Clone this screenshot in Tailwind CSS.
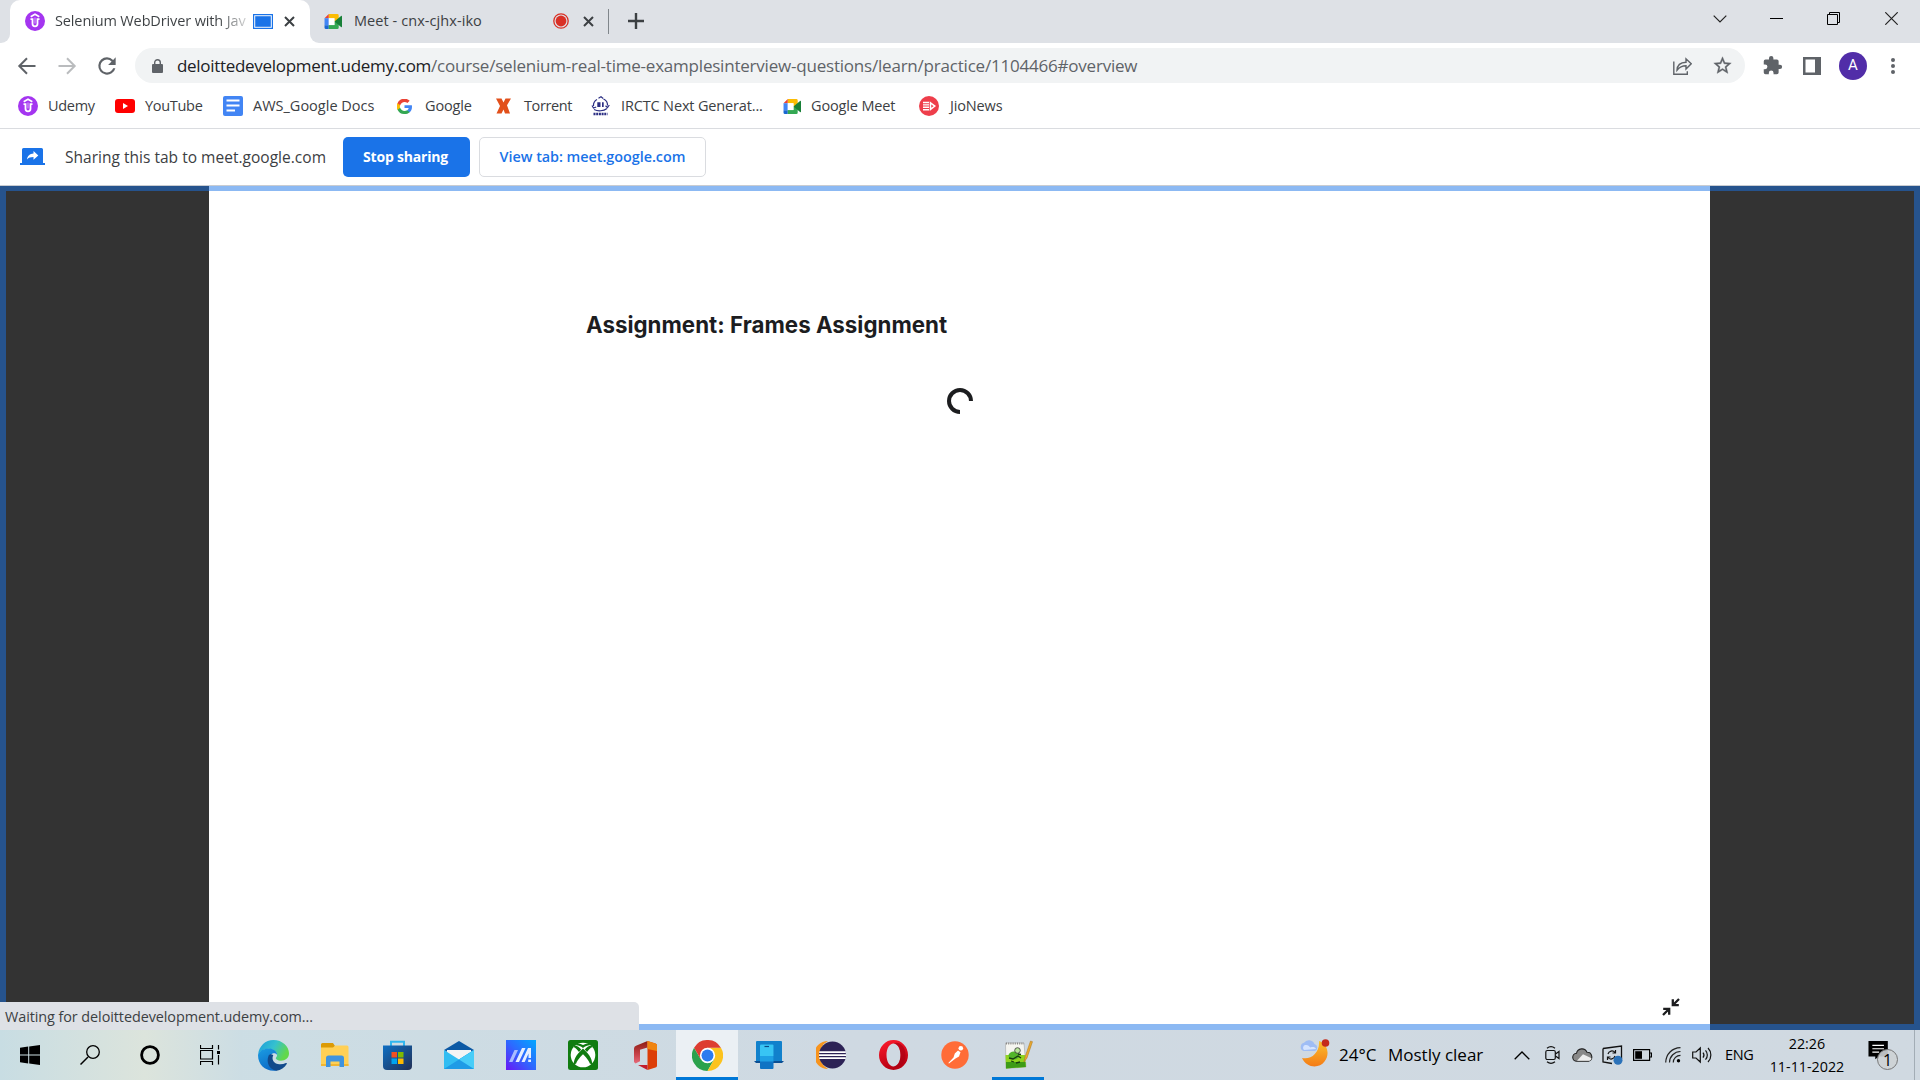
<!DOCTYPE html>
<html lang="en">
<head>
<meta charset="utf-8">
<title>Selenium WebDriver with Java</title>
<script src="https://cdn.jsdelivr.net/npm/@tailwindcss/browser@4"></script>
</head>
<body class="flex h-[1080px] w-[1920px] flex-col overflow-hidden bg-white font-['Open_Sans','Noto_Sans',sans-serif] text-[#3c4043]">

<!-- Shared icons -->
<svg class="hidden">
  <symbol id="udemy" viewBox="0 0 20 20"><circle cx="10" cy="10" r="10" fill="#a435f0"/><path d="M5.700 5.800 10 3.300l4.300 2.500" fill="none" stroke="#fff" stroke-width="1.700"/><path d="M5.500 8.200h2v4.600c0 1.600.9 2.500 2.500 2.500s2.500-.9 2.500-2.500V8.200h2" fill="none" stroke="#fff" stroke-width="1.800"/><path d="M10 6.500v6" stroke="#fff" stroke-width="1" opacity=".6"/></symbol>
  <symbol id="meet" viewBox="0 0 20 18"><path d="M5 1h9a1.5 1.5 0 0 1 1.500 1.500V9H11V5.500H5z" fill="#fbbc04"/><path d="M5 1v4.500H.500z" fill="#ea4335"/><path d="M.5 5.500H5v7.500H.500z" fill="#4285f4"/><path d="M.5 13H5v4H2a1.500 1.500 0 0 1-1.500-1.500z" fill="#1967d2"/><path d="M5 12.800h6V9h4.500v6.500A1.500 1.500 0 0 1 14 17H5z" fill="#34a853"/><path d="m11 9 7-5.800c.6-.4 1 0 1 .5v10.600c0 .6-.5.900-1 .5z" fill="#188038"/><path d="M5 5.500h6v7.300H5z" fill="#fff"/></symbol>
</svg>

<!-- Tab strip -->
<header class="flex h-[43px] shrink-0 bg-[#dee1e6] text-[14.5px]">
  <div class="flex w-[10px] bg-white"><div class="w-full rounded-br-[9px] bg-[#dee1e6]"></div></div>
  <div class="flex w-[300px] items-center rounded-t-[10px] bg-white pb-px pl-[15px]">
    <svg class="size-5 shrink-0"><use href="#udemy"/></svg>
    <div class="ml-[10px] w-[192px] bg-linear-to-r from-[#3c4043] from-85% to-[#3c4043]/20 bg-clip-text tracking-[-0.13px] whitespace-nowrap text-transparent">Selenium WebDriver with Jav</div>
    <svg class="ml-[6px] h-[15px] w-5 shrink-0" viewBox="0 0 20 15"><path d="M.6.600h18.800v13.800H.600z" fill="#fff" stroke="#1a73e8" stroke-width="1.200"/><path d="M2.200 2.200h15.600v10.600H2.200z" fill="#1a73e8"/></svg>
    <svg class="ml-[11px] size-[11px]" viewBox="0 0 11 11"><path d="m1 1 9 9m0-9-9 9" stroke="#3c4043" stroke-width="2"/></svg>
  </div>
  <div class="flex w-[299px] items-center bg-white">
    <div class="flex h-full w-full items-center rounded-bl-[9px] bg-[#dee1e6] pb-px pl-[14px]">
      <svg class="h-[17px] w-[19px]"><use href="#meet"/></svg>
      <div class="ml-[11px] w-[198px] tracking-[0.07px] whitespace-nowrap">Meet - cnx-cjhx-iko</div>
      <svg class="ml-px size-4" viewBox="0 0 16 16"><circle cx="8" cy="8" r="7.200" fill="none" stroke="#d93025" stroke-width="1.300"/><circle cx="8" cy="8" r="5.400" fill="#d93025"/></svg>
      <svg class="ml-[14px] size-[11px]" viewBox="0 0 11 11"><path d="m1 1 9 9m0-9-9 9" stroke="#3c4043" stroke-width="2"/></svg>
      <div class="ml-[14px] h-[25px] w-px bg-[#80868b]"></div>
    </div>
  </div>
  <svg class="mt-[13px] ml-[19px] size-[16px]" viewBox="0 0 16 16"><path d="M8 0v16M0 8h16" stroke="#3c4043" stroke-width="2.400"/></svg>
  <div class="ml-auto flex h-[37px] items-center text-black">
    <svg class="h-2 w-[14px]" viewBox="0 0 14 8"><path d="m.7.700 6.300 6.300L13.300.700" fill="none" stroke="#222" stroke-width="1.200"/></svg>
    <div class="ml-[43px] h-px w-[13px] bg-black"></div>
    <svg class="ml-[44px] size-[13px]" viewBox="0 0 13 13"><path d="M.5 2.500h10v10H.5zM2.500 2.500v-2h10v10h-2" fill="none" stroke="#000"/></svg>
    <svg class="mr-[22px] ml-[45px] size-[13px]" viewBox="0 0 13 13"><path d="m.3.300 12.400 12.400m0-12.400L.3 12.700" stroke="#222" stroke-width="1.200"/></svg>
  </div>
</header>

<!-- Toolbar -->
<nav class="flex h-[45px] shrink-0 items-center pl-[15px]">
  <svg class="size-6" viewBox="0 0 24 24"><path d="M20.500 12H4.500m7.500-7.700L4.300 12l7.700 7.700" fill="none" stroke="#5f6368" stroke-width="2"/></svg>
  <svg class="ml-[16px] size-6" viewBox="0 0 24 24"><path d="M3.500 12h16M12 4.300l7.700 7.700-7.700 7.700" fill="none" stroke="#babcbe" stroke-width="2"/></svg>
  <svg class="ml-[15px] size-[26px]" viewBox="0 0 24 24"><path d="M17.650 6.350A7.960 7.960 0 0 0 12 4a8 8 0 1 0 7.730 10h-2.080A6 6 0 1 1 12 6c1.660 0 3.140.690 4.220 1.780L13 11h7V4z" fill="#5f6368"/></svg>
  <div class="ml-[15px] flex h-[35px] w-[1610px] items-center rounded-full bg-[#f1f3f4] pl-[17px]">
    <svg class="h-[14px] w-[11px]" viewBox="0 0 11 14"><path d="M1 5h9a1 1 0 0 1 1 1v7a1 1 0 0 1-1 1H1a1 1 0 0 1-1-1V6a1 1 0 0 1 1-1z" fill="#5f6368"/><path d="M2.700 6V3.500a2.800 2.800 0 0 1 5.600 0V6" fill="none" stroke="#5f6368" stroke-width="1.400"/></svg>
    <div class="ml-[14px] flex text-[17px] leading-6"><span class="w-[254px] tracking-[-0.3px] whitespace-nowrap text-[#202124]">deloittedevelopment.udemy.com</span><span class="tracking-[-0.21px] whitespace-nowrap text-[#5f6368]">/course/selenium-real-time-examplesinterview-questions/learn/practice/1104466#overview</span></div>
    <svg class="ml-auto h-[18px] w-[19px]" viewBox="0 0 19 18"><path d="M.8 4.500v12.700h13.500v-3M4 13.200c.2-5 3.500-7.800 9-8V1.800l5.200 5L13 12V8.800c-4 0-6.500 1.200-9 4.400z" fill="none" stroke="#5f6368" stroke-width="1.400"/></svg>
    <svg class="mr-[12px] ml-[20px] size-[21px]" viewBox="0 0 24 24"><path d="m22 9.240-7.190-.620L12 2 9.190 8.630 2 9.240l5.460 4.730L5.820 21 12 17.270 18.180 21l-1.630-7.030zM12 15.400l-3.760 2.270 1-4.280-3.320-2.880 4.380-.380L12 6.100l1.710 4.040 4.380.380-3.320 2.880 1 4.280z" fill="#5f6368" stroke="#5f6368" stroke-width=".4"/></svg>
  </div>
  <svg class="ml-[17px] size-[21px]" viewBox="0 0 24 24"><path d="M20.500 11H19V7a2 2 0 0 0-2-2h-4V3.500a2.500 2.500 0 0 0-5 0V5H4a2 2 0 0 0-1.990 2v3.800H3.500a2.700 2.700 0 0 1 0 5.400H2V20a2 2 0 0 0 2 2h3.800v-1.500a2.700 2.700 0 0 1 5.400 0V22H17a2 2 0 0 0 2-2v-4h1.500a2.500 2.500 0 0 0 0-5z" fill="#5f6368"/></svg>
  <svg class="ml-[20px] size-[18px]" viewBox="0 0 18 18"><path d="M0 0h18v18H0zM2.500 2.500v13H12v-13z" fill="#5f6368" fill-rule="evenodd"/></svg>
  <div class="ml-[18px] flex size-7 items-center justify-center rounded-full bg-[#512da8] font-[Roboto,sans-serif] text-[15px] text-white">A</div>
  <svg class="ml-[24px] h-4 w-1" viewBox="0 0 4 16"><circle cx="2" cy="2" r="2" fill="#5f6368"/><circle cx="2" cy="8" r="2" fill="#5f6368"/><circle cx="2" cy="14" r="2" fill="#5f6368"/></svg>
</nav>

<!-- Bookmarks -->
<div class="flex h-[41px] shrink-0 items-center border-b border-[#dadce0] pb-1 pl-[18px] text-[14.5px] tracking-[-0.15px] whitespace-nowrap">
  <div class="flex w-[97px] items-center gap-[10px] tracking-[-0.3px]"><svg class="size-5"><use href="#udemy"/></svg>Udemy</div>
  <div class="flex w-[108px] items-center gap-[10px] tracking-[-0.3px]"><svg class="h-[14px] w-5" viewBox="0 0 20 14"><rect width="20" height="14" rx="3" fill="#f00"/><path d="m8 4 5 3-5 3z" fill="#fff"/></svg>YouTube</div>
  <div class="flex w-[174px] items-center gap-[10px] tracking-[0]"><svg class="size-5" viewBox="0 0 20 20"><rect width="20" height="20" rx="2" fill="#4285f4"/><path d="M3.500 4.500h13M3.500 9.500h13M3.500 14.500h8.500" stroke="#fff" stroke-width="2"/></svg>AWS_Google Docs</div>
  <div class="flex w-[99px] items-center gap-[13px]"><svg class="size-[15px]" viewBox="2 2 20 20"><path d="M22 12.200c0-.700-.1-1.400-.2-2H12v3.900h5.600a4.800 4.800 0 0 1-2.100 3.100v2.600h3.400c2-1.800 3.100-4.500 3.100-7.600z" fill="#4285f4"/><path d="M12 22c2.800 0 5.200-.9 6.900-2.500l-3.400-2.600c-.9.600-2.100 1-3.500 1-2.700 0-5-1.800-5.800-4.300H2.700v2.700A10 10 0 0 0 12 22z" fill="#34a853"/><path d="M6.200 13.800a6 6 0 0 1 0-3.800V7.400H2.700a10 10 0 0 0 0 9z" fill="#fbbc05"/><path d="M12 5.900c1.500 0 2.900.500 3.900 1.500l3-3A10 10 0 0 0 2.700 7.500l3.500 2.700C7 7.700 9.300 5.900 12 5.900z" fill="#ea4335"/></svg>Google</div>
  <div class="flex w-[95px] items-center gap-[13px] tracking-[-0.4px]"><svg class="h-[16px] w-[15px]" viewBox="0 0 15 15"><path d="M0 0h5.500l2 4 2-4H15l-4 6.700L14 15H9L7.500 11 5.500 15H.500L4 7.500z" fill="#e2501b"/></svg>Torrent</div>
  <div class="flex w-[192px] items-center gap-[11px]"><svg class="h-5 w-[19px]" viewBox="0 0 19 20"><g fill="none" stroke="#2b2e83" stroke-width="1.200"><path d="M6 3.500A6.800 6.800 0 0 0 2.500 10M12.500 3a6.800 6.800 0 0 1 4 6.500M3 13.500c4 2 9.500 1.700 13-1"/><path d="M7.500 2.200 10 .800l2.200 1.700M1 9.500l1.500 2.500 2.700-1M18.300 9l-1.800 2.500-2-1.700"/></g><path d="M6.300 6.200h3.200v4.800H6.300zM11 6.200h1.700v4.800H11z" fill="#2b2e83"/><path d="M2.500 18h14" stroke="#2b2e83" stroke-width="2.600" stroke-dasharray="2 .7"/></svg>IRCTC Next Generat...</div>
  <div class="flex w-[136px] items-center gap-[9px]"><svg class="h-[17px] w-[19px]"><use href="#meet"/></svg>Google Meet</div>
  <div class="flex items-center gap-[11px]"><svg class="size-5" viewBox="0 0 20 20"><circle cx="10" cy="10" r="10" fill="#ee3e4b"/><path d="M4 6.500h6M4 8.900h6M4 11.300h6M4 13.700h6" stroke="#fff" stroke-width="1.400"/><path d="m11.500 6.800 4.300 3.300-4.300 3.300z" fill="none" stroke="#fff" stroke-width="1.500"/></svg>JioNews</div>
</div>

<!-- Tab sharing bar -->
<div class="flex h-[57px] shrink-0 items-center border-b border-[#c9ccd1] pb-px pl-5 whitespace-nowrap">
  <svg class="h-[17px] w-[25px]" viewBox="0 0 25 17"><path d="M3.500 0h18A1.500 1.500 0 0 1 23 1.500V15h2v2H0v-2h2V1.500A1.500 1.500 0 0 1 3.500 0z" fill="#1a73e8"/><path d="M7 11.500c.5-3.800 2.800-5.600 6.500-5.900V3l4.800 4.400-4.800 4.400V9.100c-3 0-5 .8-6.500 2.400z" fill="#fff"/></svg>
  <div class="ml-5 w-[278px] pt-[2px] text-[15.5px] tracking-[0.02px]">Sharing this tab to meet.google.com</div>
  <button class="h-10 w-[127px] rounded-[5px] bg-[#1a73e8] pr-[2px] text-[14px] font-bold tracking-[-0.2px] text-white">Stop sharing</button>
  <button class="ml-[9px] h-10 w-[227px] rounded-[5px] border border-[#dadce0] text-[14.4px] font-semibold tracking-[-0.04px] text-[#1a73e8]">View tab: meet.google.com</button>
</div>

<!-- Page -->
<main class="relative flex h-[844px] shrink-0 bg-[#333]">
  <section class="ml-[209px] h-full w-[1501px] bg-white">
    <h1 class="pt-[123px] pl-[377px] font-[Inter,sans-serif] text-[22.300px] leading-8 font-bold tracking-[0.02px] text-[#1c1d1f]">Assignment: Frames Assignment</h1>
    <svg class="mx-auto mt-[46px] size-[28px]" viewBox="0 0 28 28"><path d="M25 14A11 11 0 1 0 14 25" fill="none" stroke="#1c1d1f" stroke-width="4"/></svg>
  </section>
  <svg class="absolute top-[812px] left-[1662px] size-[18px]" viewBox="0 0 18 18"><path d="M17 1l-5 5M10.800 1.200v6h6M1 17l5-5M1.200 10.800h6v6" fill="none" stroke="#1c1d1f" stroke-width="2.300"/></svg>
  <div class="absolute inset-0 border-6 border-t-5 border-[#1a73e8]/50"></div>
  <div class="absolute bottom-0 left-0 flex h-7 w-[639px] items-center rounded-tr-[5px] bg-[#dee1e6] pt-[2px] pl-[5px] text-[14.400px] tracking-[-0.07px]">Waiting for deloittedevelopment.udemy.com...</div>
</main>

<!-- Taskbar -->
<footer class="flex h-[50px] shrink-0 items-center bg-linear-to-r from-[#cbdfe5] via-[#cfd9e2] via-45% to-[#d0d9e1] text-black">
  <div class="flex h-full items-center bg-linear-to-r from-[#c8dde3] via-[#dce4dc] via-60% to-[#ccdde4]">
    <div class="flex w-[60px] justify-center"><svg class="size-5" viewBox="0 0 20 20"><path d="m0 2.800 8.200-1.200v7.900H0zM9.200 1.400 20 0v9.500H9.200zM0 10.500h8.200v7.900L0 17.200zM9.200 10.500H20V20L9.200 18.600z"/></svg></div>
    <div class="flex w-[60px] justify-center"><svg class="size-5" viewBox="0 0 20 20"><path d="M.5 19.500 8 12" stroke="#000" stroke-width="1.500"/><circle cx="13" cy="7" r="6.300" fill="none" stroke="#000" stroke-width="1.300"/></svg></div>
    <div class="flex w-[60px] justify-center"><svg class="size-5" viewBox="0 0 20 20"><circle cx="10" cy="10" r="8.400" fill="none" stroke="#000" stroke-width="2.800"/></svg></div>
    <div class="flex w-[62px] justify-center pr-[2px]"><svg class="h-5 w-5" viewBox="0 0 20 20"><path d="M.5 0v3.500h12V0M.5 20v-3.500h12V20M.5 5.500h12v8.500H.5zM18.500 0v4.500M18.500 10v9.500" fill="none" stroke="#000" stroke-width="1.200"/><path d="M17 6h3v3h-3z"/></svg></div>
  </div>

  <!-- Edge -->
  <div class="flex w-[62px] justify-center"><svg class="size-[31px]" viewBox="0 0 30 30"><defs><linearGradient id="eg" x1="0" x2="1" y2=".4"><stop stop-color="#1c9bdc"/><stop offset=".55" stop-color="#35c1cf"/><stop offset="1" stop-color="#62d84b"/></linearGradient><linearGradient id="eb" x2=".4" y2="1"><stop stop-color="#1b9de2"/><stop offset="1" stop-color="#0c6cc8"/></linearGradient></defs><path d="M.2 13.500C1 6 7 0 15 0c8.500 0 15 6.200 15 12.800 0 4.600-3.600 7.200-7.800 7.200-3.200 0-5-1.200-5-2.300 0-.8 1.300-1.300 1.300-3.200 0-3.300-3.500-6-8-6C6 8.500 2.500 10.500.2 13.500z" fill="url(#eg)"/><path d="M.1 14C1.500 10.500 5.500 8.300 10.300 8.300c4.600 0 8.200 2.500 8.200 6.200-1-2-4.500-2.500-6.300.1-3 4.500 1.300 11.700 7.300 12.200l-1.500 2.800C7.500 31.300-.7 23.500.1 14z" fill="url(#eb)"/><path d="M10.200 15.300c-2.500 6 .5 13.700 7.800 14.400 4-.5 7.800-3 9.800-6.500.4-.8-.2-1.200-.8-.9-5.500 2.700-11.500.7-12.700-3.300-.4-1.600-.2-3 .5-4.300-1.500-1.300-3.800-1.200-4.600.6z" fill="#114a8b"/></svg></div>
  <!-- File Explorer -->
  <div class="flex w-[62px] justify-center"><svg class="h-6 w-7" viewBox="0 0 28 24"><path d="M0 1.500A1.500 1.500 0 0 1 1.500 0H12l2 3-2 3H0z" fill="#dc9a05"/><path d="M0 4.500h12L14.500 2.500H26A1.500 1.500 0 0 1 27.500 4v19H0z" fill="#ffd056"/><path d="M0 21h27.500v2H0z" fill="#f2b632"/><path d="M5 24v-9a2.500 2.500 0 0 1 2.500-2.500h13A2.500 2.500 0 0 1 23 15v9h-4.500v-5.500h-9V24z" fill="#3f93df"/></svg></div>
  <!-- Store -->
  <div class="flex w-[62px] justify-center"><svg class="h-[30px] w-[29px]" viewBox="0 0 29 30"><defs><linearGradient id="st" x2="1" y2="1"><stop stop-color="#0d6fc4"/><stop offset="1" stop-color="#222f54"/></linearGradient></defs><path d="M8 7V1.800h13V7" fill="none" stroke="#30b7ef" stroke-width="2"/><path d="M0 5.500h29V26a4 4 0 0 1-4 4H4a4 4 0 0 1-4-4z" fill="url(#st)"/><path d="M8.500 12H14v5.500H8.500z" fill="#f25022"/><path d="M15 12h5.500v5.500H15z" fill="#7fba00"/><path d="M8.500 18.500H14V24H8.500z" fill="#00a4ef"/><path d="M15 18.500h5.500V24H15z" fill="#ffb900"/></svg></div>
  <!-- Mail -->
  <div class="flex w-[62px] justify-center"><svg class="h-7 w-[30px]" viewBox="0 0 30 28"><path d="M0 9 15 0l15 9-15 9z" fill="#0c59a4"/><path d="M3 9h24v6l-12 6L3 15z" fill="#f4f4f4"/><path d="m0 9 15 9.500L30 9v19H0z" fill="#32bdf2"/><path d="M0 28 30 9v19z" fill="#1e9be6"/><path d="m15 18.500 15 9.500V9z" fill="#48cdf8"/></svg></div>
  <!-- MyASUS -->
  <div class="flex w-[62px] justify-center"><svg class="size-[30px]" viewBox="0 0 30 30"><defs><linearGradient id="ma" x1="1" x2="0" y2="1"><stop stop-color="#00a8ff"/><stop offset=".5" stop-color="#2e68ff"/><stop offset="1" stop-color="#6a16f5"/></linearGradient></defs><path d="M0 0h30v30H0z" fill="url(#ma)"/><path d="M3 22 8.500 10H12L6.500 22z" fill="#a9bcff"/><path d="M9.500 22 16 8h3.500L13 22zM15.500 22 22 8h3v10h-2.500v-4.500L18.700 22zM22.200 19.500H25V22h-2.800z" fill="#e6efff"/></svg></div>
  <!-- Xbox -->
  <div class="flex w-[62px] justify-center"><svg class="size-[30px]" viewBox="0 0 30 30"><rect width="30" height="30" rx="2.500" fill="#107c10"/><circle cx="15" cy="15" r="12.300" fill="#fff"/><path d="M6.500 5.500C9 4.700 12 5.500 15 8c3-2.500 6-3.300 8.500-2.500-2-2.300-5-2.200-8.500-.5-3.500-1.700-6.500-1.800-8.500.5z" fill="#107c10"/><path d="M15 8.500C19 12 25 18.500 24 24.500l-2.200-1C20.500 20 17 16 15 14.300 13 16 9.500 20 8.200 23.500l-2.200 1C5 18.500 11 12 15 8.500z" fill="#107c10"/><path d="M6.200 6c2.200-.7 5 1.200 7 3.500L11 12C9.500 10 7.500 7.500 5.500 7zM23.800 6c-2.200-.7-5 1.200-7 3.500L19 12c1.500-2 3.500-4.500 5.500-5z" fill="#107c10"/></svg></div>
  <!-- Office -->
  <div class="flex w-[62px] justify-center"><svg class="h-[29px] w-[23px]" viewBox="0 0 23 29"><defs><linearGradient id="of" y2="1" x2="0"><stop stop-color="#8b1b12"/><stop offset=".6" stop-color="#c8434a"/><stop offset="1" stop-color="#e66b7a"/></linearGradient></defs><path d="M0 7.500A3 3 0 0 1 2 4.800L13.500 0v6.500L6 8.800v11.500L1.500 22.500 0 21z" fill="url(#of)"/><path d="m13.500 0 8 2.500A2 2 0 0 1 23 4.500v20a2 2 0 0 1-1.500 2L13.500 29z" fill="#dc3e08"/><path d="m13.500 0 8 2.500A2 2 0 0 1 23 4.500V10l-9.500-2z" fill="#f08511"/><path d="M4 24h9.500v5z" fill="#c31e2d"/></svg></div>
  <!-- Chrome, active -->
  <div class="flex h-full w-[62px] items-center justify-center border-b-3 border-[#0078d7] bg-[#ebf0f4] pt-[3px]"><svg class="size-[31px]" viewBox="0 0 30 30"><path d="M2 7.500a15 15 0 0 0 13 22.500l6.500-11.300L15 15l-6.500 3.700z" fill="#2ba24c"/><path d="M28 7.500H15l6.500 11.200L15 30A15 15 0 0 0 28 7.500z" fill="#fcc31e"/><path d="M2 7.500A15 15 0 0 1 28 7.500H15v7.500L8.500 18.700z" fill="#dd3d31"/><circle cx="15" cy="15" r="7.400" fill="#fff"/><circle cx="15" cy="15" r="5.800" fill="#2c7bef"/></svg></div>
  <!-- Phone Link -->
  <div class="flex w-[62px] justify-center"><svg class="h-7 w-[30px]" viewBox="0 0 30 28"><path d="M2 1a1 1 0 0 1 1-1h24a1 1 0 0 1 1 1v19H2z" fill="#1181cc"/><path d="M0 20h30l-2 2H2z" fill="#0b4f93"/><rect x="6" y="3.500" width="13.500" height="24.500" rx="1" fill="#0f74c4"/><path d="M6 4.500a1 1 0 0 1 1-1h11.500a1 1 0 0 1 1 1V15H6z" fill="#38c5f4"/><path d="M6 15h13.500v5.500H6z" fill="#1ea0e4"/><path d="M10.500 5.500H15" stroke="#0a4a86" stroke-width="1.200"/></svg></div>
  <!-- Eclipse -->
  <div class="flex w-[62px] justify-center"><svg class="h-7 w-[30px]" viewBox="0 0 30 28"><path d="M12 0a14 14 0 0 0 0 28A16 16 0 0 1 12 0z" fill="#f7941e"/><circle cx="16.500" cy="14" r="13.500" fill="#2c2255"/><path d="M3.200 11.200h26.600M3 14.200h27M3.200 17.200h26.600" stroke="#fff" stroke-width="1.700"/></svg></div>
  <!-- Opera -->
  <div class="flex w-[62px] justify-center"><svg class="h-[30px] w-[29px]" viewBox="0 0 29 30"><defs><linearGradient id="op" x2=".3" y2="1"><stop stop-color="#ff1b2d"/><stop offset="1" stop-color="#b70012"/></linearGradient></defs><path d="M14.500 0a14.500 15 0 1 0 0 30 14.500 15 0 0 0 0-30zm0 3.500c4 0 7 5 7 11.500s-3 11.500-7 11.500-7-5-7-11.500 3-11.500 7-11.500z" fill="url(#op)" fill-rule="evenodd"/><path d="M14.500 3.500C20 1 26.500 6 26.500 15s-6.500 14-12 11.500c4 0 7-5 7-11.500s-3-11.500-7-11.500z" fill="#a70014" opacity=".65"/></svg></div>
  <!-- Postman -->
  <div class="flex w-[62px] justify-center"><svg class="size-7" viewBox="0 0 28 28"><circle cx="14" cy="14" r="13.700" fill="#ff6c37"/><circle cx="19.800" cy="7.300" r="2.300" fill="#fff"/><path d="m17 9.500 2.500 1.700-1.500 4.300-3.500 2L8 22.500l-.7-.5 5.200-5.500 1.300-4z" fill="#fff"/></svg></div>
  <!-- Notepad++ -->
  <div class="flex h-full w-[64px] justify-center"><div class="flex w-[52px] items-center justify-center border-b-3 border-[#0078d7] pt-[3px]"><svg class="h-[30px] w-[29px]" viewBox="0 0 29 30"><path d="M1.500 3H20l2 24-20 1.500z" fill="#f5f5f0" stroke="#999" stroke-width=".5"/><path d="M1.500 15h19.500l.8 12L2 28.500z" fill="#8fd41f"/><path d="M2 22h19.500l.3 5L2 28.500z" fill="#3d9b16"/><path d="M2 3.500h18" stroke="#888" stroke-width="2" stroke-dasharray="1 1.200"/><ellipse cx="10" cy="15.500" rx="5.500" ry="4" fill="#52b52a"/><circle cx="13.500" cy="10.500" r="2.800" fill="#b9e69a" stroke="#333" stroke-width=".8"/><path d="m5 18 4 1 5-3 3 2M7 21l3 1M14 14l3 .500M12 23l4-1" fill="none" stroke="#173d10" stroke-width="1.300"/><path d="m20 22 1-5L26.500 1l2 .7L23 18z" fill="#e9a92f" stroke="#a9721a" stroke-width=".5"/></svg></div></div>

  <!-- System tray -->
  <div class="ml-auto flex h-full items-center whitespace-nowrap">
    <svg class="mb-[3px] h-[29px] w-[31px]" viewBox="0 0 31 29"><defs><linearGradient id="mn" y2="1" x2="0"><stop stop-color="#fbc02d"/><stop offset="1" stop-color="#f47b16"/></linearGradient></defs><path d="M20 2c9 3 11 14 5.500 20.500C20 30 7.500 29 3 19c9 2 18-5 17-17z" fill="url(#mn)"/><path d="M4.500 12a4.300 4.300 0 0 1 .5-8.200A6 6 0 0 1 15.500 5a3.700 3.700 0 0 1 .5 7z" fill="#9fbdf5"/><path d="M5 11a3 3 0 0 1 1-5c3-.5 4 1 5.500 2.500 2-1 5-.5 5.500 1.500z" fill="#d5e4ff"/><circle cx="26.500" cy="4" r="3.800" fill="#c42b1c"/></svg>
    <div class="ml-[9px] w-[49px] text-[17px]">24°C</div>
    <div class="w-[126px] text-[17px]">Mostly clear</div>
    <svg class="h-[9px] w-4" viewBox="0 0 16 9"><path d="m.7 8.300 7.300-7.300 7.300 7.300" fill="none" stroke="#000" stroke-width="1.300"/></svg>
    <svg class="ml-[15px] h-[18px] w-[15px]" viewBox="0 0 15 18" fill="none" stroke="#111" stroke-width="1.200"><rect x=".8" y="4.500" width="9.500" height="9" rx="1.500"/><path d="m10.500 8 3.500-2.500v7L10.500 10M2 2.300c2.500-2 5.500-2 8 0M2 15.700c2.500 2 5.500 2 8 0"/></svg>
    <svg class="ml-[12px] h-[14px] w-[21px]" viewBox="0 0 21 14"><path d="M5 13.300a4 4 0 0 1-.5-8A5.500 5.500 0 0 1 15 4.300a4.600 4.600 0 0 1 1.500 9z" fill="#898989" stroke="#222" stroke-width="1.100"/><path d="m5 12.800 6-6.500 8.500 4c-.5 2-1.500 2.500-3 2.500z" fill="#eee"/></svg>
    <svg class="ml-[9px] h-5 w-[21px]" viewBox="0 0 21 20"><path d="M1 3.500 19.500 1v13M1 3.500V17l9 1.500" fill="none" stroke="#111" stroke-width="1.300"/><path d="M6 9a4 4 0 0 1 7-1.500m.5-2.500v3h-3M13 11a4 4 0 0 1-7 1.500M5.500 15v-3h3" fill="none" stroke="#111" stroke-width="1.200"/><circle cx="16" cy="15.300" r="4.500" fill="#2b72b9"/></svg>
    <svg class="ml-[10px] h-3 w-[19px]" viewBox="0 0 19 12"><path d="M.6.600h16v10.800H.600zM17 4h1.500v4H17" fill="none" stroke="#000" stroke-width="1.200"/><path d="M2.200 2.200H9v7.600H2.200z"/></svg>
    <svg class="ml-[13px] size-4" viewBox="0 0 16 16"><g fill="none" stroke="#222" stroke-width="1.200"><path d="M.7 15.500C1 7 7 1 15.500.7M4.500 15.500c0-6 5-11 11-11M8.300 15.500c0-4 3.200-7.200 7.200-7.200"/></g><circle cx="13.500" cy="13.800" r="1.700"/></svg>
    <svg class="ml-[11px] h-[18px] w-5" viewBox="0 0 20 18" fill="none" stroke="#111" stroke-width="1.200"><path d="M.7 6v6H4l4.300 4V2L4 6zM11 6.500a4 4 0 0 1 0 5M13.500 4.300a7 7 0 0 1 0 9.400M16 2a10 10 0 0 1 0 14"/></svg>
    <div class="ml-[13px] w-[44px] text-[14.5px] tracking-[-0.4px]">ENG</div>
    <div class="flex w-[76px] flex-col items-center text-[14.300px] leading-[23px]"><span>22:26</span><span>11-11-2022</span></div>
    <div class="relative ml-[22px] h-[30px] w-[31px] pt-px">
      <svg class="size-full" viewBox="0 0 31 30"><path d="M1 0h20v16h-9l-4 3v-3H1z"/><path d="M5 4.500h12M5 8h12M5 11.500h7" stroke="#fff" stroke-width="1.200"/></svg>
      <div class="absolute right-0 bottom-0 flex size-[21px] items-center justify-center rounded-full border border-[#777] bg-[#cdd1d5]/90 text-[16px]">1</div>
    </div>
    <div class="mr-[5px] ml-[16px] h-full w-px bg-[#a3adb5]"></div>
  </div>
</footer>
</body>
</html>
